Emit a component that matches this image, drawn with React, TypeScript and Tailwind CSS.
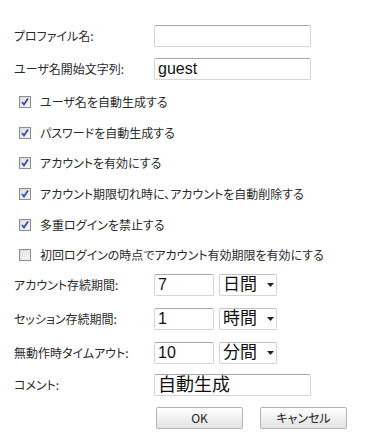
import React from "react";

const labelFont = { fontFamily: '"Noto Sans CJK JP", "Noto Sans", sans-serif', fontFeatureSettings: '"palt"' };
const inputFont = { fontFamily: '"Liberation Sans", "Noto Sans CJK JP", sans-serif' };

function Box({ value, w, size = "text-[16px]" }: { value: string; w: string; size?: string }) {
  return (
    <div
      className={`${w} h-[22px] border border-[#d4d4d4] border-t-[#a8a8a8] rounded-[2px] bg-white flex items-center pl-[3px] ${size} text-[#111] leading-none`}
      style={inputFont}
    >
      {value}
    </div>
  );
}

function Sel({ value }: { value: string }) {
  return (
    <div
      className="w-[58px] h-[22px] border border-[#d4d4d4] border-t-[#c0c0c0] rounded-[2px] bg-white flex items-center pl-[3px] text-[17px] text-[#111] leading-none"
      style={inputFont}
    >
      <span>{value}</span>
      <svg width="7" height="4" viewBox="0 0 7 4" className="ml-[10px]">
        <path d="M0 0 L7 0 L3.5 4 Z" fill="#222" />
      </svg>
    </div>
  );
}

function Check({ checked, label }: { checked: boolean; label: string }) {
  return (
    <div className="h-[30.6px] flex items-center pl-[5px]">
      <div className="w-[12px] h-[12px] border border-[#8e8e8e] bg-gradient-to-br from-[#d8d8d8] to-[#f4f4f4] p-[1px] flex">
        <div className="flex-1 bg-gradient-to-br from-[#e0e2e8] to-[#f6f6f8] relative">
          {checked && (
            <svg width="10" height="10" viewBox="0 0 10 10" className="absolute left-[-1px] top-[-1px]">
              <path d="M2 5 L4 7.5 L8 1.5" stroke="#3a4aa8" strokeWidth="1.8" fill="none" />
            </svg>
          )}
        </div>
      </div>
      <span className="ml-[9px] text-[12px] text-[#2a2a2a] leading-none" style={labelFont}>
        {label}
      </span>
    </div>
  );
}

function Row({ label, children }: { label: string; children: React.ReactNode }) {
  return (
    <div className="flex items-center h-[22px]">
      <div className="w-[140px] text-[12px] text-[#2a2a2a] leading-none" style={labelFont}>
        {label}
      </div>
      {children}
    </div>
  );
}

export default function App() {
  return (
    <div className="w-[365px] h-[445px] bg-white pl-[14px] pt-[25px] flex flex-col">
      <Row label="プロファイル名:">
        <Box value="" w="w-[157px]" />
      </Row>
      <div className="mt-[11px]">
        <Row label="ユーザ名開始文字列:">
          <Box value="guest" w="w-[157px]" />
        </Row>
      </div>
      <div className="mt-[7px] flex flex-col">
        <Check checked label="ユーザ名を自動生成する" />
        <Check checked label="パスワードを自動生成する" />
        <Check checked label="アカウントを有効にする" />
        <Check checked label="アカウント期限切れ時に、アカウントを自動削除する" />
        <Check checked label="多重ログインを禁止する" />
        <Check checked={false} label="初回ログインの時点でアカウント有効期限を有効にする" />
      </div>
      <div className="mt-[3px] flex flex-col gap-[12px]">
        <Row label="アカウント存続期間:">
          <Box value="7" w="w-[60px]" />
          <div className="ml-[5px]"><Sel value="日間" /></div>
        </Row>
        <Row label="セッション存続期間:">
          <Box value="1" w="w-[60px]" />
          <div className="ml-[5px]"><Sel value="時間" /></div>
        </Row>
        <Row label="無動作時タイムアウト:">
          <Box value="10" w="w-[60px]" />
          <div className="ml-[5px]"><Sel value="分間" /></div>
        </Row>
      </div>
      <div className="mt-[10px]">
        <Row label="コメント:">
          <Box value="自動生成" w="w-[157px]" size="text-[18px]" />
        </Row>
      </div>
      <div className="mt-[11px] flex pl-[142px] gap-[17px]">
        <button
          className="w-[87px] h-[22px] border border-[#b4b4b4] rounded-[2px] bg-gradient-to-b from-[#ffffff] to-[#e2e2e2] text-[12px] text-[#222] leading-none"
          style={labelFont}
        >
          OK
        </button>
        <button
          className="w-[87px] h-[22px] border border-[#b4b4b4] rounded-[2px] bg-gradient-to-b from-[#ffffff] to-[#e2e2e2] text-[12px] text-[#222] leading-none"
          style={labelFont}
        >
          キャンセル
        </button>
      </div>
    </div>
  );
}
